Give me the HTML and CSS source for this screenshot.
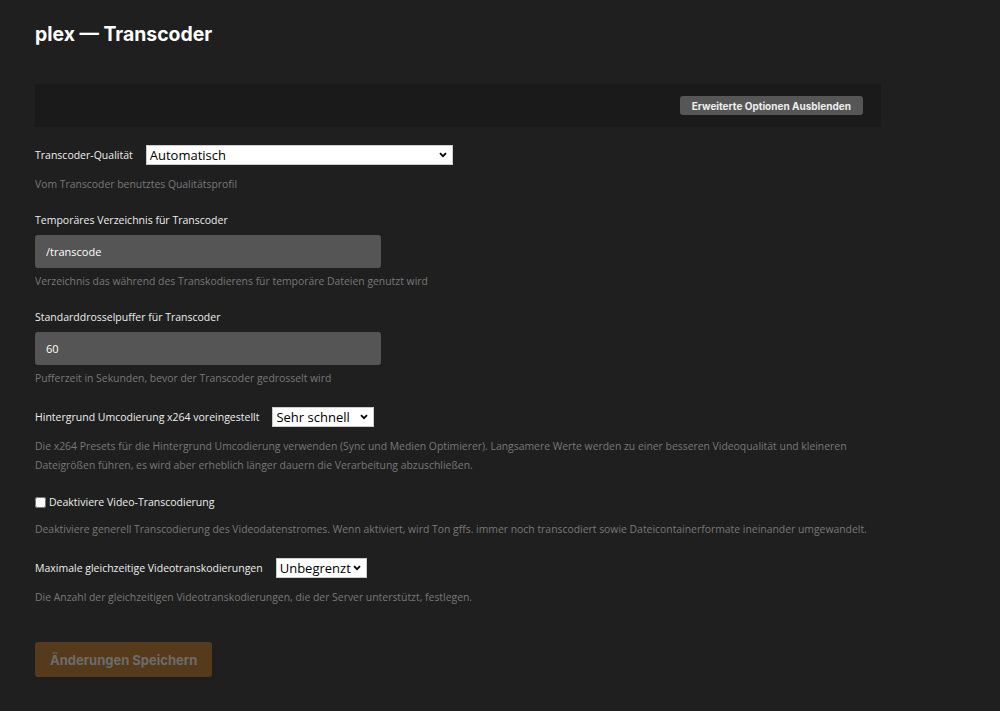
FILE: index.html
```html
<!DOCTYPE html>
<html lang="de">
<head>
    <meta charset="UTF-8">
    <meta name="viewport" content="width=device-width, initial-scale=1.0">
    <title>plex — Transcoder</title>
    <link rel="stylesheet" href="styles.css">
</head>
<body>
    <div class="page">
        <h1 class="page-title">plex — Transcoder</h1>

        <div class="toolbar">
            <button class="toolbar-btn">Erweiterte Optionen Ausblenden</button>
        </div>

        <form class="settings">
            <div class="field">
                <div class="inline-row">
                    <label class="field-label">Transcoder-Qualität</label>
                    <select class="select select-wide">
                        <option>Automatisch</option>
                    </select>
                </div>
                <p class="help">Vom Transcoder benutztes Qualitätsprofil</p>
            </div>

            <div class="field">
                <label class="field-label">Temporäres Verzeichnis für Transcoder</label>
                <input class="text-input" type="text" value="/transcode">
                <p class="help">Verzeichnis das während des Transkodierens für temporäre Dateien genutzt wird</p>
            </div>

            <div class="field">
                <label class="field-label">Standarddrosselpuffer für Transcoder</label>
                <input class="text-input" type="text" value="60">
                <p class="help">Pufferzeit in Sekunden, bevor der Transcoder gedrosselt wird</p>
            </div>

            <div class="field">
                <div class="inline-row">
                    <label class="field-label">Hintergrund Umcodierung x264 voreingestellt</label>
                    <select class="select select-preset">
                        <option>Sehr schnell</option>
                    </select>
                </div>
                <p class="help">Die x264 Presets für die Hintergrund Umcodierung verwenden (Sync und Medien Optimierer). Langsamere Werte werden zu einer besseren Videoqualität und kleineren Dateigrößen führen, es wird aber erheblich länger dauern die Verarbeitung abzuschließen.</p>
            </div>

            <div class="field">
                <label class="check-row">
                    <input class="checkbox" type="checkbox">
                    <span>Deaktiviere Video-Transcodierung</span>
                </label>
                <p class="help">Deaktiviere generell Transcodierung des Videodatenstromes. Wenn aktiviert, wird Ton gffs. immer noch transcodiert sowie Dateicontainerformate ineinander umgewandelt.</p>
            </div>

            <div class="field">
                <div class="inline-row">
                    <label class="field-label">Maximale gleichzeitige Videotranskodierungen</label>
                    <select class="select select-limit">
                        <option>Unbegrenzt</option>
                    </select>
                </div>
                <p class="help">Die Anzahl der gleichzeitigen Videotranskodierungen, die der Server unterstützt, festlegen.</p>
            </div>

            <button class="save-btn" type="button" disabled>Änderungen Speichern</button>
        </form>
    </div>
</body>
</html>
```

FILE: styles.css
```css
* {
    box-sizing: border-box;
}

body {
    margin: 0;
    background-color: #1f1f1f;
    color: #eeeeee;
    font-family: "Open Sans", "Noto Sans", sans-serif;
}

.page {
    width: 881px;
    padding: 22px 0 30px 35px;
}

.page-title {
    margin: 0;
    font-family: Inter, "Open Sans", sans-serif;
    font-size: 19.4px;
    font-weight: 700;
    line-height: 24px;
    color: #ffffff;
}

.toolbar {
    display: flex;
    justify-content: flex-end;
    align-items: center;
    height: 43px;
    margin-top: 38px;
    padding-right: 18px;
    background-color: #1a1a1a;
}

.toolbar-btn {
    height: 19px;
    padding: 0 12px;
    border: none;
    border-radius: 3px;
    background-color: #565656;
    color: #eeeeee;
    font-family: Inter, "Open Sans", sans-serif;
    font-size: 10px;
    font-weight: 700;
    cursor: pointer;
}

.settings {
    margin-top: 18px;
}

.field {
    margin-bottom: 19px;
}

.inline-row {
    display: flex;
    align-items: center;
    gap: 13px;
}

.field-label {
    display: block;
    font-size: 10.5px;
    line-height: 15px;
    color: #eeeeee;
}

.select {
    appearance: none;
    height: 20px;
    padding: 0 14px 0 3px;
    border: 1px solid #cccccc;
    border-radius: 0;
    background-color: #ffffff;
    background-image: url("data:image/svg+xml,%3Csvg xmlns='http://www.w3.org/2000/svg' width='8' height='6' viewBox='0 0 8 6'%3E%3Cpath d='M1 1.2l3 3 3-3' fill='none' stroke='%23000' stroke-width='1.8'/%3E%3C/svg%3E");
    background-repeat: no-repeat;
    background-position: right 5px center;
    background-size: 8px 6px;
    color: #000000;
    font-family: "Open Sans", sans-serif;
    font-size: 13px;
}

.select-wide {
    width: 307px;
}

.select-preset {
    width: 102px;
}

.select-limit {
    width: 91px;
}

.text-input {
    display: block;
    width: 346px;
    height: 33px;
    margin-top: 7px;
    padding: 0 11px;
    border: none;
    border-radius: 3px;
    background-color: #555555;
    color: #ffffff;
    font-family: "Open Sans", sans-serif;
    font-size: 11px;
}

.help {
    margin: 10px 0 0;
    font-size: 10.4px;
    line-height: 19px;
    color: #787878;
}

.text-input + .help {
    margin-top: 4px;
}

.check-row {
    display: flex;
    align-items: center;
    gap: 3px;
    min-height: 17px;
    font-size: 10.5px;
    line-height: 15px;
}

.check-row + .help {
    margin-top: 9px;
}

.checkbox {
    width: 11px;
    height: 11px;
    margin: 0;
}

.save-btn {
    height: 35px;
    margin-top: 16px;
    padding: 0 15px;
    border: none;
    border-radius: 3px;
    background-color: #553a1b;
    color: #6c6c6c;
    font-family: Inter, "Open Sans", sans-serif;
    font-size: 13px;
    font-weight: 700;
}
```
